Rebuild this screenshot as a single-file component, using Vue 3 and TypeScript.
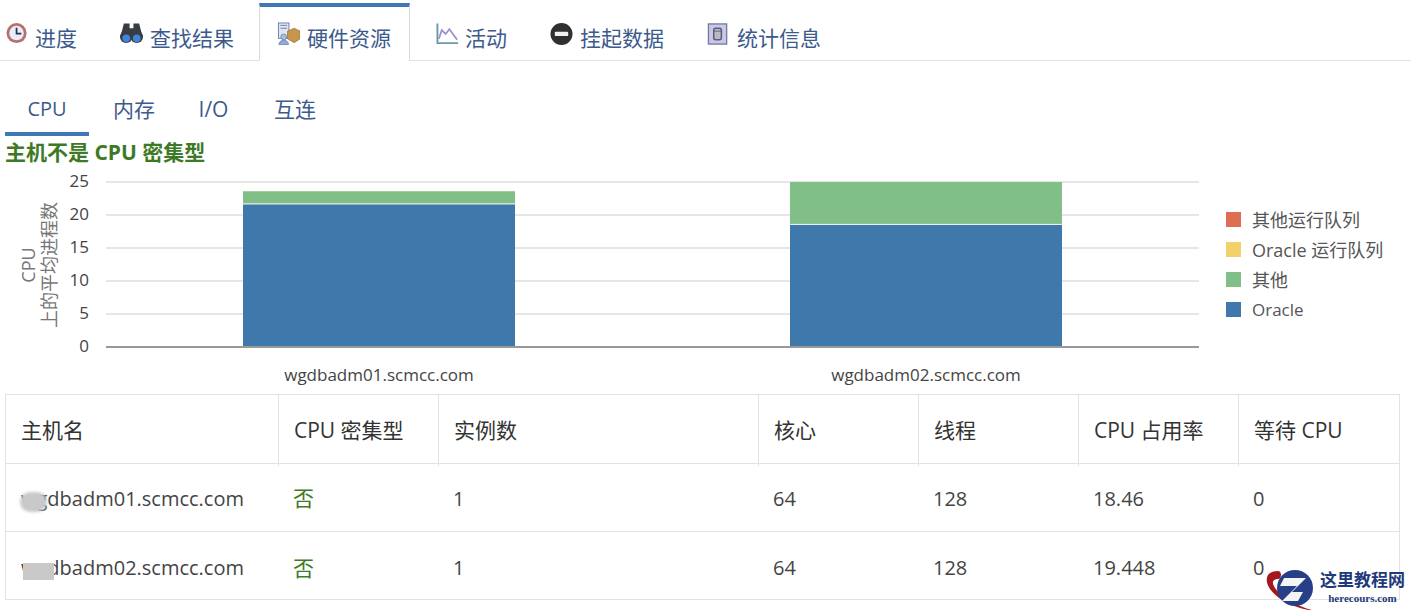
<template>
  <div class="page">
    <nav class="tabs">
      <div v-for="tab in tabs" :key="tab.label" class="tab" :class="{ active: tab.label === '硬件资源' }" :style="{ gap: tab.gap + 'px' }">
        <svg class="tab-icon" width="23" height="24" viewBox="0 0 24 24">
          <template v-if="tab.icon === 'clock'">
            <circle cx="11" cy="11" r="10.5" fill="#b96f72" />
            <circle cx="11" cy="11" r="7.6" fill="#e9edf7" />
            <path d="M11 5.5V11.5H16" stroke="#2a3042" stroke-width="1.8" fill="none" />
          </template>
          <template v-else-if="tab.icon === 'binoculars'">
            <path d="M4 1h6v5h4V1h6l3 12H1z" fill="#3a3c44" />
            <circle cx="6.5" cy="15" r="6.5" fill="#3a3c44" />
            <circle cx="17.5" cy="15" r="6.5" fill="#3a3c44" />
            <circle cx="6.5" cy="16.5" r="4" fill="#3f86d8" />
            <circle cx="17.5" cy="16.5" r="4" fill="#3f86d8" />
          </template>
          <template v-else-if="tab.icon === 'hardware'">
            <rect x="1.5" y="0.5" width="11" height="16" fill="#dfe5f2" stroke="#6f7fa8" />
            <path d="M3.5 3h7M3.5 6h7" stroke="#6f7fa8" />
            <path d="M11 9l7-3 6 3v8l-6 4-7-4z" fill="#c7954b" stroke="#8f6a30" stroke-width="0.7" />
            <circle cx="7" cy="15" r="3" fill="#a9bde0" stroke="#5c74a6" stroke-width="0.7" />
            <path d="M2 23c0-6 10-6 10 0z" fill="#8fa9d8" stroke="#5c74a6" stroke-width="0.7" />
          </template>
          <template v-else-if="tab.icon === 'chart'">
            <path d="M1.5 1v20.5H23" stroke="#6d9aa8" stroke-width="2" fill="none" />
            <path d="M3 17l3-9 4 4 4-5 8 11" stroke="#9a92d2" stroke-width="1.9" fill="none" />
          </template>
          <template v-else-if="tab.icon === 'stop'">
            <circle cx="12" cy="12" r="11.5" fill="#303030" />
            <rect x="5" y="9.6" width="14" height="4.6" rx="1" fill="#f2f2f2" />
          </template>
          <template v-else>
            <rect x="1.5" y="1.5" width="19" height="21" fill="#c9c8e8" stroke="#777aa0" stroke-width="1.4" />
            <rect x="7" y="6" width="8" height="12" rx="2" fill="#b9b9c6" stroke="#5d5f78" stroke-width="1.6" />
            <path d="M7 9h8" stroke="#5d5f78" />
          </template>
        </svg>
        <span>{{ tab.label }}</span>
      </div>
    </nav>

    <div class="subtabs">
      <div v-for="(sub, i) in subtabs" :key="sub.label" class="subtab" :class="{ active: i === 0 }" :style="{ width: sub.width + 'px' }">
        {{ sub.label }}
      </div>
    </div>

    <h2 class="status">主机不是 CPU 密集型</h2>

    <div class="chart-row">
      <svg class="chart" width="1220" height="224" viewBox="0 0 1220 224">
        <text class="axis-title" transform="translate(35 95) rotate(-90)" text-anchor="middle">CPU</text>
        <text class="axis-title" transform="translate(56 95) rotate(-90)" text-anchor="middle">上的平均进程数</text>
        <g v-for="tick in ticks" :key="tick">
          <line x1="106" x2="1199" :y1="yOf(tick)" :y2="yOf(tick)" :stroke="tick === 0 ? '#999' : '#e6e6e6'" stroke-width="2" />
          <text class="tick" x="89" :y="yOf(tick) + 5" text-anchor="end">{{ tick }}</text>
        </g>
        <g v-for="bar in bars" :key="bar.host">
          <rect :x="bar.x" :y="yOf(bar.oracle + bar.other)" width="272" :height="bar.other * 6.6 - 1" fill="#80bf87" />
          <rect :x="bar.x" :y="yOf(bar.oracle)" width="272" :height="bar.oracle * 6.6 - 1" fill="#3f78ab" />
          <text class="host" :x="bar.x + 136" y="211" text-anchor="middle">{{ bar.host }}</text>
        </g>
      </svg>
      <ul class="legend">
        <li v-for="item in legend" :key="item.label">
          <i :style="{ background: item.color }"></i>{{ item.label }}
        </li>
      </ul>
    </div>

    <div class="table">
      <div class="row head">
        <div v-for="col in columns" :key="col" class="cell">{{ col }}</div>
      </div>
      <div v-for="row in rows" :key="row.host" class="row">
        <div class="cell host-cell">
          {{ row.host }}
          <span class="smudge" :class="row.smudge"></span>
        </div>
        <div class="cell no">否</div>
        <div class="cell">1</div>
        <div class="cell">64</div>
        <div class="cell">128</div>
        <div class="cell">{{ row.usage }}</div>
        <div class="cell">0</div>
      </div>
    </div>

    <div class="watermark">
      <svg width="64" height="50" viewBox="0 0 64 50">
        <path d="M16 5C4 5 2 14 8 23c7 10 24 20 46 22-18-4-34-13-41-23-4-6-2-9 3-9 4 0 4-8 0-8z" fill="#a5171c" />
        <circle cx="33" cy="22" r="18" fill="#263f86" />
        <path d="M22 12h22L30 26h11l-5 9H20l15-15H18z" fill="#f4f4f4" />
      </svg>
      <div class="wm-text">
        <strong>这里教程网</strong>
        <small>herecours.com</small>
      </div>
    </div>
  </div>
</template>

<script setup lang="ts">
const tabs = [
  { label: '进度', icon: 'clock', gap: 6 },
  { label: '查找结果', icon: 'binoculars', gap: 7 },
  { label: '硬件资源', icon: 'hardware', gap: 7 },
  { label: '活动', icon: 'chart', gap: 6 },
  { label: '挂起数据', icon: 'stop', gap: 7 },
  { label: '统计信息', icon: 'stats', gap: 7 }
]

const subtabs = [
  { label: 'CPU', width: 84 },
  { label: '内存', width: 90 },
  { label: 'I/O', width: 69 },
  { label: '互连', width: 94 }
]

const ticks = [25, 20, 15, 10, 5, 0]

// 坐标系：0 在 y=177，每单位 6.6px
const yOf = (v: number) => 177 - v * 6.6

const bars = [
  { host: 'wgdbadm01.scmcc.com', x: 243, oracle: 21.6, other: 2 },
  { host: 'wgdbadm02.scmcc.com', x: 790, oracle: 18.5, other: 6.5 }
]

const legend = [
  { label: '其他运行队列', color: '#dd6e51' },
  { label: 'Oracle 运行队列', color: '#f2d16b' },
  { label: '其他', color: '#80bf87' },
  { label: 'Oracle', color: '#3f78ab' }
]

const columns = ['主机名', 'CPU 密集型', '实例数', '核心', '线程', 'CPU 占用率', '等待 CPU']

const rows = [
  { host: 'wgdbadm01.scmcc.com', usage: '18.46', smudge: 'a' },
  { host: 'wgdbadm02.scmcc.com', usage: '19.448', smudge: 'b' }
]
</script>

<style scoped>
.page {
  position: relative;
  width: 1411px;
  height: 610px;
  overflow: hidden;
  background: #fff;
  font-family: "Open Sans", "Noto Sans CJK SC", sans-serif;
  font-size: 20px;
  color: #333;
}

.tabs {
  display: flex;
  height: 61px;
  box-sizing: border-box;
  border-bottom: 1px solid #e2e2e2;
}

.tab {
  display: flex;
  align-items: flex-start;
  box-sizing: border-box;
  height: 61px;
  padding: 22px 18px 0;
  margin-right: 7px;
  font-size: 21px;
  color: #3c5a8c;
  white-space: nowrap;
}

.tab:first-child {
  padding-left: 6px;
}

.tab span {
  line-height: 32px;
}

.tab-icon {
  flex: none;
}

.tab.active {
  margin-top: 3px;
  margin-right: 8px;
  height: 58px;
  padding: 15px 18px 0 17px;
  background: #fff;
  border: 1px solid #dcdcdc;
  border-top: 4px solid #3f78b5;
  border-bottom: none;
}

.subtabs {
  display: flex;
  margin: 24px 0 0 5px;
  height: 51px;
}

.subtab {
  box-sizing: border-box;
  height: 51px;
  line-height: 48px;
  text-align: center;
  font-size: 21px;
  color: #3c5a8c;
  white-space: nowrap;
}

.subtab.active {
  font-size: 20px;
  border-bottom: 4px solid #3f78b5;
}

.status {
  margin: 0 0 0 5px;
  height: 34px;
  line-height: 32px;
  font-size: 21px;
  font-weight: 700;
  color: #3d7a25;
}

.chart-row {
  display: flex;
  height: 224px;
}

.chart {
  flex: none;
  display: block;
}

.tick {
  font-size: 17px;
  fill: #444;
}

.axis-title {
  font-size: 18px;
  fill: #777;
}

.host {
  font-size: 17px;
  fill: #444;
}

.legend {
  list-style: none;
  margin: 34px 0 0 6px;
  padding: 0;
  font-size: 18px;
  color: #555;
  white-space: nowrap;
}

.legend li {
  display: flex;
  align-items: center;
  height: 30px;
}

.legend li:last-child {
  font-size: 17px;
}

.legend i {
  width: 15px;
  height: 15px;
  margin-right: 11px;
}

.table {
  width: 1395px;
  margin-left: 5px;
  box-sizing: border-box;
  border: 1px solid #e2e2e2;
}

.row {
  display: grid;
  grid-template-columns: 272px 160px 320px 160px 160px 160px 1fr;
  box-sizing: border-box;
  height: 68px;
  border-top: 1px solid #e2e2e2;
}

.row:last-child .cell {
  line-height: 72px;
}

.row.head {
  border-top: none;
  height: 68px;
}

.cell {
  position: relative;
  padding-left: 15px;
  line-height: 70px;
  color: #444;
  white-space: nowrap;
}

.head .cell {
  line-height: 71px;
  font-size: 21px;
  color: #333;
  border-left: 1px solid #e2e2e2;
}

.head .cell:first-child {
  border-left: none;
}

.cell.no {
  font-size: 21px;
  line-height: 69px;
  color: #3d7a25;
}

.smudge {
  position: absolute;
  background: #c9c9c9;
}

.smudge.a {
  top: 28px;
  left: 14px;
  width: 27px;
  height: 20px;
  border-radius: 10px;
  filter: blur(1.5px);
}

.smudge.b {
  top: 31px;
  left: 17px;
  width: 31px;
  height: 17px;
}

.watermark {
  position: absolute;
  right: 0;
  bottom: 0;
  display: flex;
  align-items: flex-start;
  width: 147px;
  height: 44px;
}

.watermark svg {
  flex: none;
  margin: 0 -6px 0 -2px;
}

.wm-text {
  display: flex;
  flex-direction: column;
  align-items: center;
  padding-top: 4px;
  font-family: "Liberation Serif", "Noto Sans CJK SC", serif;
  color: #1e3a7a;
}

.wm-text strong {
  font-size: 17px;
  line-height: 22px;
}

.wm-text small {
  font-size: 11px;
  line-height: 12px;
  font-weight: 700;
}
</style>
